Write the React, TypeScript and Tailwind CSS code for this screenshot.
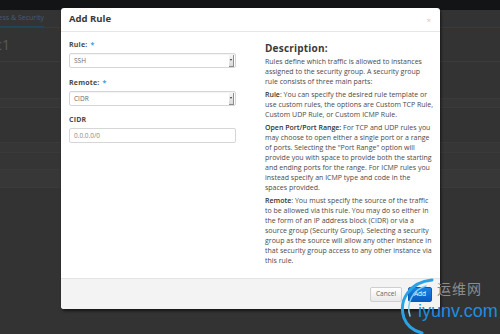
import React from 'react';

const FONT = { fontFamily: '"Open Sans", "Liberation Sans", sans-serif' };

function FieldLabel({ text, required }: { text: string; required?: boolean }) {
  return (
    <div className="h-[15px] flex items-center text-[7px] font-bold text-[#4a4a4a] tracking-[0.2px]">
      {text}
      {required && <span className="ml-[3px] text-[#3b9fd8]">*</span>}
    </div>
  );
}

function FakeSelect({ value }: { value: string }) {
  return (
    <div className="h-[15px] w-[167px] flex items-center border border-[#d6d6d6] rounded-[2px] bg-white shadow-[inset_0_1px_1px_rgba(0,0,0,0.05)]">
      <span className="flex-1 pl-[4px] text-[6.5px] text-[#6b6b6b]">{value}</span>
      <div className="w-[5px] h-[12px] mr-[1px] flex items-center justify-center bg-gradient-to-b from-[#f6f6f6] to-[#d9d9d9] border-r border-b border-[#8d8d8d]">
        <div className="w-0 h-0 border-l-[1.5px] border-r-[1.5px] border-t-[2px] border-l-transparent border-r-transparent border-t-[#333]" />
      </div>
    </div>
  );
}

function Para({ lead, children }: { lead?: string; children: React.ReactNode }) {
  return (
    <p className="mb-[3px]">
      {lead && <span className="font-semibold text-[#333]">{lead}</span>}
      {children}
    </p>
  );
}

export default function App() {
  return (
    <div className="relative w-[500px] h-[334px] overflow-hidden bg-[#333333]" style={FONT}>
      {/* page behind the dialog */}
      <div className="h-[10px] bg-[#131415]" />
      <div className="h-[18px] border-b border-[#2c3e4c] flex items-end">
        <div className="w-[44px] h-[17px] overflow-hidden flex justify-end items-center border-b border-[#23465e]">
          <span className="whitespace-nowrap text-[7px] text-[#3f5e73]">Access &amp; Security</span>
        </div>
      </div>
      <div className="h-[34px] border-b border-[#3b3b3b] flex items-center">
        <div className="w-[10px] overflow-hidden flex justify-end">
          <span className="whitespace-nowrap text-[14px] text-[#5a5a5a]">c1</span>
        </div>
      </div>
      <div className="h-[37px] border-b border-[#3a3a3a]" />
      <div className="h-[9px] bg-[#363636] border-b border-[#3a3a3a]" />
      <div className="h-[35px] border-b border-[#3a3a3a]" />
      <div className="h-[10px] bg-[#363636] border-b border-[#3a3a3a]" />
      <div className="h-[17px] bg-[#353535] border-b border-[#3a3a3a]" />
      <div className="h-[18px] bg-[#373737] border-b border-[#3a3a3a]" />

      {/* dialog */}
      <div className="absolute left-[61px] top-[8px] w-[379px] h-[301px] flex flex-col bg-white rounded-[3px] shadow-[1px_2px_3px_rgba(0,0,0,0.6)] overflow-hidden">
        <div className="h-[24px] shrink-0 flex items-center justify-between pl-[8px] pr-[9px] border-b border-[#e6e6e6]">
          <span className="text-[9.5px] font-bold text-[#3a3a3a]">Add Rule</span>
          <span className="text-[8px] text-[#c4c4c4] leading-none">×</span>
        </div>

        <div className="flex-1 flex pl-[8px] pr-[6px]">
          <div className="w-[167px] pt-[6px]">
            <FieldLabel text="Rule:" required />
            <FakeSelect value="SSH" />
            <div className="h-[8px]" />
            <FieldLabel text="Remote:" required />
            <FakeSelect value="CIDR" />
            <div className="h-[7px]" />
            <FieldLabel text="CIDR" />
            <div className="h-[15px] w-[167px] flex items-center border border-[#d6d6d6] rounded-[2px] bg-white">
              <span className="pl-[4px] text-[6.5px] text-[#8a8a8a]">0.0.0.0/0</span>
            </div>
          </div>

          <div className="w-[172px] ml-[29px] pt-[10px] text-[7px] leading-[10px] text-[#4a4a4a]">
            <h3 className="text-[10px] leading-[12px] mb-[3px] font-bold text-[#3a3a3a] tracking-[0.2px]">Description:</h3>
            <Para>
              Rules define which traffic is allowed to instances assigned to the security group. A security group rule consists of three main parts:
            </Para>
            <Para lead="Rule">
              : You can specify the desired rule template or use custom rules, the options are Custom TCP Rule, Custom UDP Rule, or Custom ICMP Rule.
            </Para>
            <Para lead="Open Port/Port Range:">
              {' '}For TCP and UDP rules you may choose to open either a single port or a range of ports. Selecting the "Port Range" option will provide you with space to provide both the starting and ending ports for the range. For ICMP rules you instead specify an ICMP type and code in the spaces provided.
            </Para>
            <Para lead="Remote">
              : You must specify the source of the traffic to be allowed via this rule. You may do so either in the form of an IP address block (CIDR) or via a source group (Security Group). Selecting a security group as the source will allow any other instance in that security group access to any other instance via this rule.
            </Para>
          </div>
        </div>

        <div className="h-[31px] shrink-0 flex items-center justify-end gap-[6px] pr-[8px] bg-[#f3f3f3] border-t border-[#e4e4e4]">
          <button className="h-[15px] w-[32px] rounded-[2px] border border-[#cfcfcf] bg-gradient-to-b from-white to-[#e9e9e9] text-[6.5px] text-[#666]">
            Cancel
          </button>
          <button className="h-[15px] w-[24px] rounded-[2px] border border-[#0a5bb5] bg-gradient-to-b from-[#1a82e0] to-[#0a5cc4] text-[6.5px] text-white">
            Add
          </button>
        </div>
      </div>

      {/* watermark */}
      <svg className="absolute left-[396px] top-[276px]" width="40" height="58" viewBox="0 0 40 58">
        <path d="M36 4 C 14 6, 2 24, 8 42 C 11 50, 18 55, 26 57" stroke="#2aa3e6" strokeWidth="3" fill="none" strokeLinecap="round" />
        <path d="M30 10 C 16 14, 10 28, 14 40" stroke="#7ccdf4" strokeWidth="1.5" fill="none" strokeLinecap="round" />
      </svg>
      <div className="absolute left-[437px] top-[279px] text-[14px] leading-[18px] text-[#8c8c8c] tracking-[1px]" style={{ fontFamily: '"Noto Sans CJK SC", sans-serif' }}>
        运维网
      </div>
      <div className="absolute left-[418px] top-[299px] text-[18px] leading-[24px] text-[#1b8fe0]" style={{ fontFamily: '"Liberation Sans", sans-serif' }}>
        iyunv.com
      </div>
    </div>
  );
}
